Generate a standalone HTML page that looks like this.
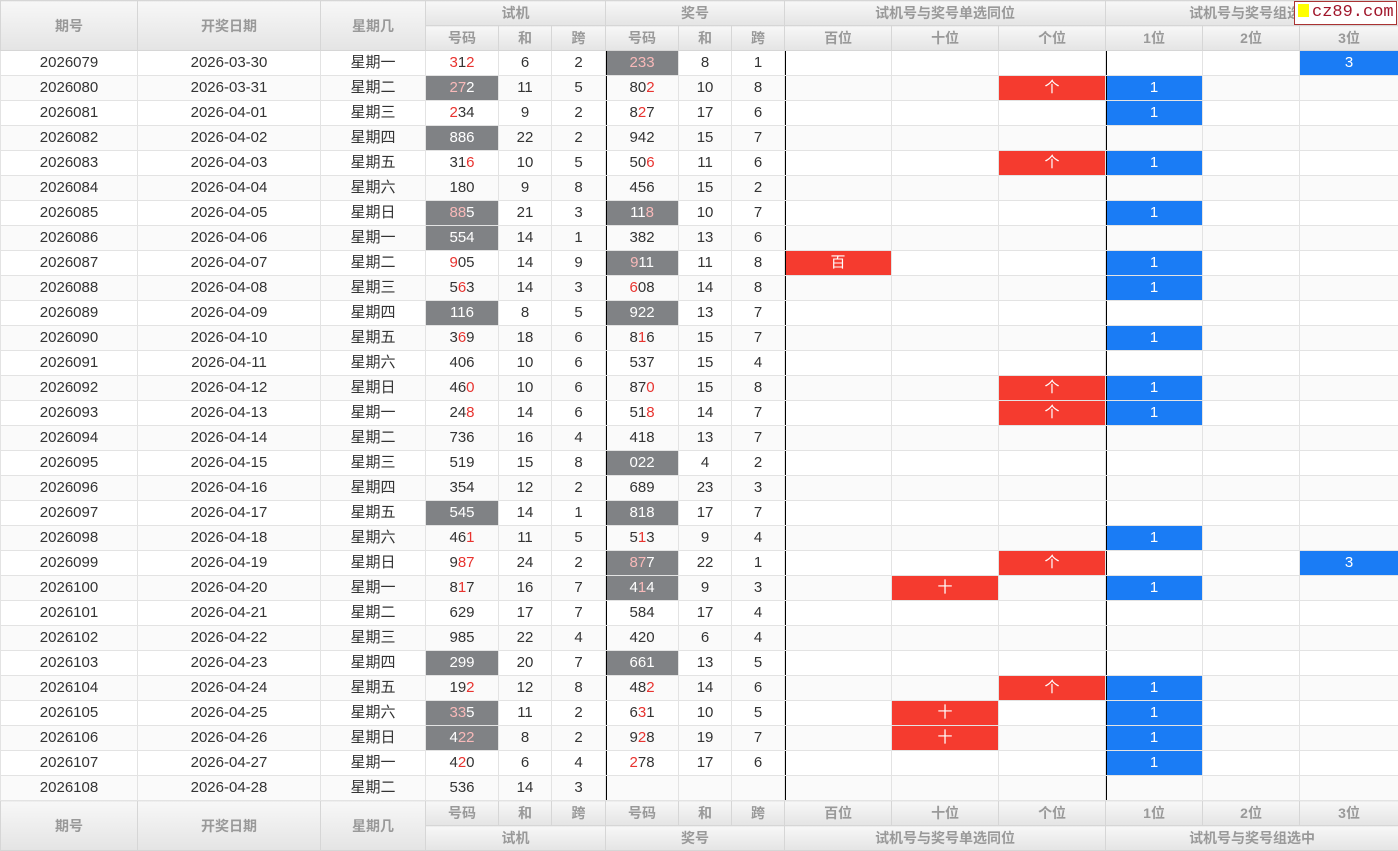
<!DOCTYPE html>
<html><head><meta charset="utf-8"><style>
body{margin:0;width:1398px;height:849px;overflow:hidden;background:#fff;font-family:"Liberation Sans","Noto Sans CJK SC",sans-serif;}
table{border-collapse:collapse;table-layout:fixed;width:1398px;font-size:15px;color:#333;}
td,th{height:24px;padding:0;text-align:center;border:1px solid #e3e3e3;white-space:nowrap;overflow:hidden;line-height:24px}
th{background:linear-gradient(#f7f7f7,#e4e4e4);color:#999;font-weight:bold;font-size:14px;border-color:#d6d6d6}
tbody tr:nth-child(even) td{background:#fafafa}
tbody td.g{background:#808285!important;color:#fff}
tbody td.rr{background:#f53b2f!important;color:#fff}
tbody td.bb{background:#1a7cf5!important;color:#fff}
.r{color:#e8332f}.g .r{color:#f8b9b9}
tbody td.L{box-shadow:inset 1px 0 0 #000}
#wm{position:absolute;left:1294px;top:1px;width:101px;height:22px;background:#fff;border:1px solid #a33;font-family:"Liberation Mono",monospace;color:#a0152a;font-size:17px;line-height:22px}
#wm i{display:inline-block;width:11px;height:13px;background:#ff0;margin:0 3px 0 3px;vertical-align:-1px}
</style></head><body>
<div id="wm"><i></i>cz89.com</div>
<table>
<colgroup><col style="width:137px"><col style="width:183px"><col style="width:105px"><col style="width:73px"><col style="width:53px"><col style="width:54px"><col style="width:73px"><col style="width:53px"><col style="width:53px"><col style="width:107px"><col style="width:107px"><col style="width:107px"><col style="width:97px"><col style="width:97px"><col style="width:99px"></colgroup>
<thead>
<tr><th rowspan="2">期号</th><th rowspan="2">开奖日期</th><th rowspan="2">星期几</th><th colspan="3">试机</th><th colspan="3">奖号</th><th colspan="3">试机号与奖号单选同位</th><th colspan="3">试机号与奖号组选中</th></tr>
<tr><th>号码</th><th>和</th><th>跨</th><th>号码</th><th>和</th><th>跨</th><th>百位</th><th>十位</th><th>个位</th><th>1位</th><th>2位</th><th>3位</th></tr>
</thead>
<tbody>
<tr><td>2026079</td><td>2026-03-30</td><td>星期一</td><td><span class="r">3</span>1<span class="r">2</span></td><td>6</td><td>2</td><td class="g L"><span class="r">233</span></td><td>8</td><td>1</td><td class="L"></td><td></td><td></td><td class="L"></td><td></td><td class="bb">3</td></tr>
<tr><td>2026080</td><td>2026-03-31</td><td>星期二</td><td class="g"><span class="r">27</span>2</td><td>11</td><td>5</td><td class="L">80<span class="r">2</span></td><td>10</td><td>8</td><td class="L"></td><td></td><td class="rr">个</td><td class="bb L">1</td><td></td><td></td></tr>
<tr><td>2026081</td><td>2026-04-01</td><td>星期三</td><td><span class="r">2</span>34</td><td>9</td><td>2</td><td class="L">8<span class="r">2</span>7</td><td>17</td><td>6</td><td class="L"></td><td></td><td></td><td class="bb L">1</td><td></td><td></td></tr>
<tr><td>2026082</td><td>2026-04-02</td><td>星期四</td><td class="g">886</td><td>22</td><td>2</td><td class="L">942</td><td>15</td><td>7</td><td class="L"></td><td></td><td></td><td class="L"></td><td></td><td></td></tr>
<tr><td>2026083</td><td>2026-04-03</td><td>星期五</td><td>31<span class="r">6</span></td><td>10</td><td>5</td><td class="L">50<span class="r">6</span></td><td>11</td><td>6</td><td class="L"></td><td></td><td class="rr">个</td><td class="bb L">1</td><td></td><td></td></tr>
<tr><td>2026084</td><td>2026-04-04</td><td>星期六</td><td>180</td><td>9</td><td>8</td><td class="L">456</td><td>15</td><td>2</td><td class="L"></td><td></td><td></td><td class="L"></td><td></td><td></td></tr>
<tr><td>2026085</td><td>2026-04-05</td><td>星期日</td><td class="g"><span class="r">88</span>5</td><td>21</td><td>3</td><td class="g L">11<span class="r">8</span></td><td>10</td><td>7</td><td class="L"></td><td></td><td></td><td class="bb L">1</td><td></td><td></td></tr>
<tr><td>2026086</td><td>2026-04-06</td><td>星期一</td><td class="g">554</td><td>14</td><td>1</td><td class="L">382</td><td>13</td><td>6</td><td class="L"></td><td></td><td></td><td class="L"></td><td></td><td></td></tr>
<tr><td>2026087</td><td>2026-04-07</td><td>星期二</td><td><span class="r">9</span>05</td><td>14</td><td>9</td><td class="g L"><span class="r">9</span>11</td><td>11</td><td>8</td><td class="rr L">百</td><td></td><td></td><td class="bb L">1</td><td></td><td></td></tr>
<tr><td>2026088</td><td>2026-04-08</td><td>星期三</td><td>5<span class="r">6</span>3</td><td>14</td><td>3</td><td class="L"><span class="r">6</span>08</td><td>14</td><td>8</td><td class="L"></td><td></td><td></td><td class="bb L">1</td><td></td><td></td></tr>
<tr><td>2026089</td><td>2026-04-09</td><td>星期四</td><td class="g">116</td><td>8</td><td>5</td><td class="g L">922</td><td>13</td><td>7</td><td class="L"></td><td></td><td></td><td class="L"></td><td></td><td></td></tr>
<tr><td>2026090</td><td>2026-04-10</td><td>星期五</td><td>3<span class="r">6</span>9</td><td>18</td><td>6</td><td class="L">8<span class="r">1</span>6</td><td>15</td><td>7</td><td class="L"></td><td></td><td></td><td class="bb L">1</td><td></td><td></td></tr>
<tr><td>2026091</td><td>2026-04-11</td><td>星期六</td><td>406</td><td>10</td><td>6</td><td class="L">537</td><td>15</td><td>4</td><td class="L"></td><td></td><td></td><td class="L"></td><td></td><td></td></tr>
<tr><td>2026092</td><td>2026-04-12</td><td>星期日</td><td>46<span class="r">0</span></td><td>10</td><td>6</td><td class="L">87<span class="r">0</span></td><td>15</td><td>8</td><td class="L"></td><td></td><td class="rr">个</td><td class="bb L">1</td><td></td><td></td></tr>
<tr><td>2026093</td><td>2026-04-13</td><td>星期一</td><td>24<span class="r">8</span></td><td>14</td><td>6</td><td class="L">51<span class="r">8</span></td><td>14</td><td>7</td><td class="L"></td><td></td><td class="rr">个</td><td class="bb L">1</td><td></td><td></td></tr>
<tr><td>2026094</td><td>2026-04-14</td><td>星期二</td><td>736</td><td>16</td><td>4</td><td class="L">418</td><td>13</td><td>7</td><td class="L"></td><td></td><td></td><td class="L"></td><td></td><td></td></tr>
<tr><td>2026095</td><td>2026-04-15</td><td>星期三</td><td>519</td><td>15</td><td>8</td><td class="g L">022</td><td>4</td><td>2</td><td class="L"></td><td></td><td></td><td class="L"></td><td></td><td></td></tr>
<tr><td>2026096</td><td>2026-04-16</td><td>星期四</td><td>354</td><td>12</td><td>2</td><td class="L">689</td><td>23</td><td>3</td><td class="L"></td><td></td><td></td><td class="L"></td><td></td><td></td></tr>
<tr><td>2026097</td><td>2026-04-17</td><td>星期五</td><td class="g">545</td><td>14</td><td>1</td><td class="g L">818</td><td>17</td><td>7</td><td class="L"></td><td></td><td></td><td class="L"></td><td></td><td></td></tr>
<tr><td>2026098</td><td>2026-04-18</td><td>星期六</td><td>46<span class="r">1</span></td><td>11</td><td>5</td><td class="L">5<span class="r">1</span>3</td><td>9</td><td>4</td><td class="L"></td><td></td><td></td><td class="bb L">1</td><td></td><td></td></tr>
<tr><td>2026099</td><td>2026-04-19</td><td>星期日</td><td>9<span class="r">87</span></td><td>24</td><td>2</td><td class="g L"><span class="r">87</span>7</td><td>22</td><td>1</td><td class="L"></td><td></td><td class="rr">个</td><td class="L"></td><td></td><td class="bb">3</td></tr>
<tr><td>2026100</td><td>2026-04-20</td><td>星期一</td><td>8<span class="r">1</span>7</td><td>16</td><td>7</td><td class="g L">4<span class="r">1</span>4</td><td>9</td><td>3</td><td class="L"></td><td class="rr">十</td><td></td><td class="bb L">1</td><td></td><td></td></tr>
<tr><td>2026101</td><td>2026-04-21</td><td>星期二</td><td>629</td><td>17</td><td>7</td><td class="L">584</td><td>17</td><td>4</td><td class="L"></td><td></td><td></td><td class="L"></td><td></td><td></td></tr>
<tr><td>2026102</td><td>2026-04-22</td><td>星期三</td><td>985</td><td>22</td><td>4</td><td class="L">420</td><td>6</td><td>4</td><td class="L"></td><td></td><td></td><td class="L"></td><td></td><td></td></tr>
<tr><td>2026103</td><td>2026-04-23</td><td>星期四</td><td class="g">299</td><td>20</td><td>7</td><td class="g L">661</td><td>13</td><td>5</td><td class="L"></td><td></td><td></td><td class="L"></td><td></td><td></td></tr>
<tr><td>2026104</td><td>2026-04-24</td><td>星期五</td><td>19<span class="r">2</span></td><td>12</td><td>8</td><td class="L">48<span class="r">2</span></td><td>14</td><td>6</td><td class="L"></td><td></td><td class="rr">个</td><td class="bb L">1</td><td></td><td></td></tr>
<tr><td>2026105</td><td>2026-04-25</td><td>星期六</td><td class="g"><span class="r">33</span>5</td><td>11</td><td>2</td><td class="L">6<span class="r">3</span>1</td><td>10</td><td>5</td><td class="L"></td><td class="rr">十</td><td></td><td class="bb L">1</td><td></td><td></td></tr>
<tr><td>2026106</td><td>2026-04-26</td><td>星期日</td><td class="g">4<span class="r">22</span></td><td>8</td><td>2</td><td class="L">9<span class="r">2</span>8</td><td>19</td><td>7</td><td class="L"></td><td class="rr">十</td><td></td><td class="bb L">1</td><td></td><td></td></tr>
<tr><td>2026107</td><td>2026-04-27</td><td>星期一</td><td>4<span class="r">2</span>0</td><td>6</td><td>4</td><td class="L"><span class="r">2</span>78</td><td>17</td><td>6</td><td class="L"></td><td></td><td></td><td class="bb L">1</td><td></td><td></td></tr>
<tr><td>2026108</td><td>2026-04-28</td><td>星期二</td><td>536</td><td>14</td><td>3</td><td class="L"></td><td></td><td></td><td class="L"></td><td></td><td></td><td class="L"></td><td></td><td></td></tr>
</tbody>
<tfoot>
<tr><th rowspan="2">期号</th><th rowspan="2">开奖日期</th><th rowspan="2">星期几</th><th>号码</th><th>和</th><th>跨</th><th>号码</th><th>和</th><th>跨</th><th>百位</th><th>十位</th><th>个位</th><th>1位</th><th>2位</th><th>3位</th></tr>
<tr><th colspan="3">试机</th><th colspan="3">奖号</th><th colspan="3">试机号与奖号单选同位</th><th colspan="3">试机号与奖号组选中</th></tr>
</tfoot>
</table>
</body></html>
